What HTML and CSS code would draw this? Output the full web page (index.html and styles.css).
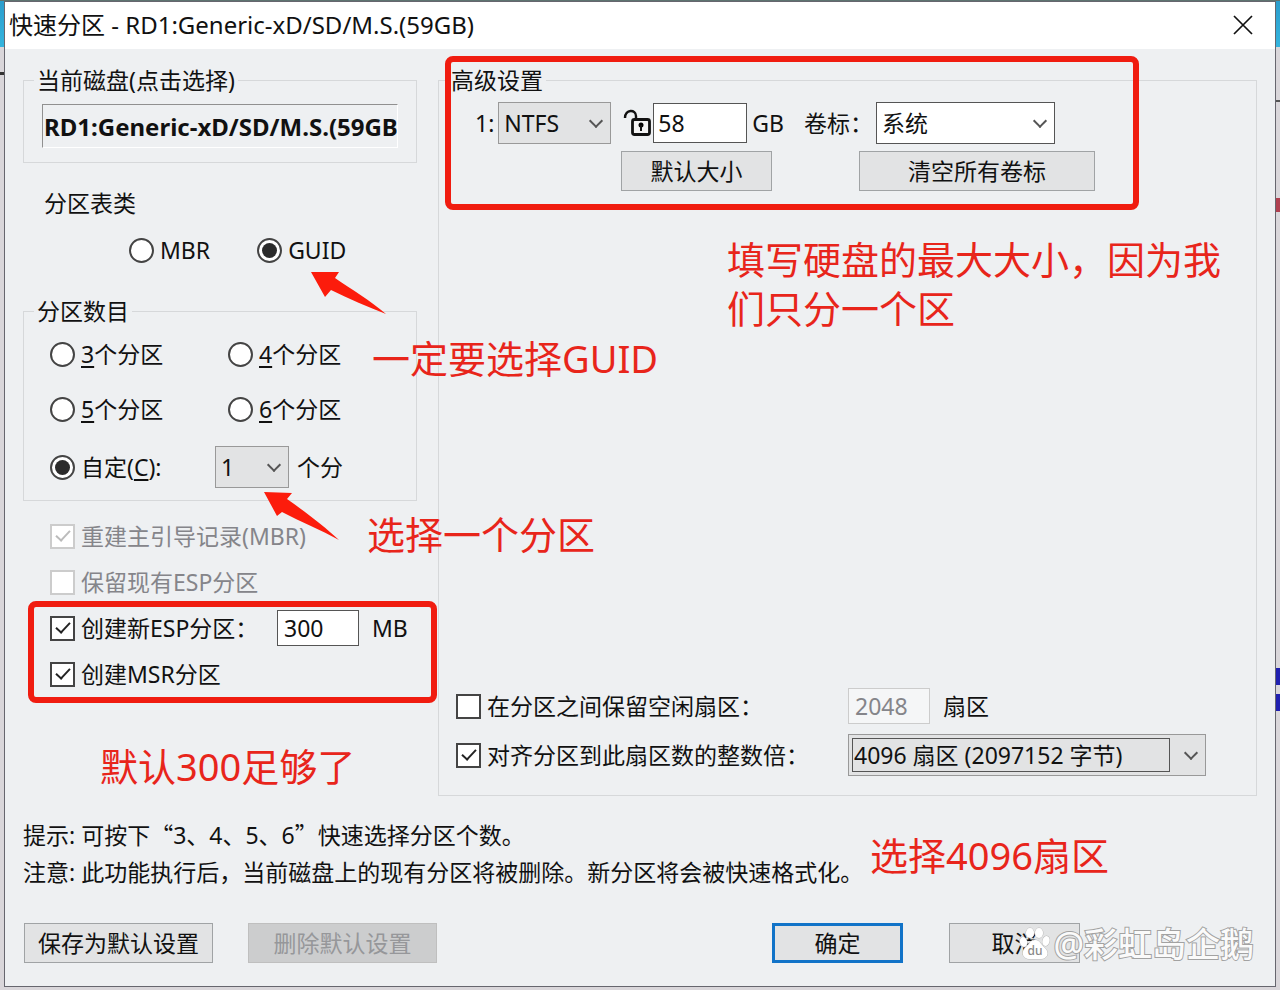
FILE: index.html
```html
<!DOCTYPE html>
<html lang="zh-CN">
<head>
  <meta charset="UTF-8">
  <meta name="viewport" content="width=device-width, initial-scale=1.0">
  <title>快速分区</title>
  <link rel="stylesheet" href="styles.css">
</head>
<body>
  <div class="dialog">
    <header class="titlebar">
      <h1>快速分区 - RD1:Generic-xD/SD/M.S.(59GB)</h1>
      <button class="close" type="button" aria-label="关闭">
        <svg width="20" height="20" viewBox="0 0 20 20"><path d="M1 1L19 19M19 1L1 19" fill="none" stroke="#111" stroke-width="1.7"/></svg>
      </button>
    </header>

    <form class="content">
      <div class="columns">
        <div class="left">
          <fieldset class="group disk">
            <legend>当前磁盘(点击选择)</legend>
            <input class="disk-name" type="text" aria-label="当前磁盘" value="RD1:Generic-xD/SD/M.S.(59GB" readonly>
          </fieldset>

          <div class="table-title">分区表类</div>
          <div class="table-type">
            <label class="option"><input type="radio" name="table">MBR</label>
            <label class="option"><input type="radio" name="table" checked>GUID</label>
          </div>

          <fieldset class="group count">
            <legend>分区数目</legend>
            <div class="count-grid">
              <label class="option"><input type="radio" name="count"><span><u>3</u>个分区</span></label>
              <label class="option"><input type="radio" name="count"><span><u>4</u>个分区</span></label>
              <label class="option"><input type="radio" name="count"><span><u>5</u>个分区</span></label>
              <label class="option"><input type="radio" name="count"><span><u>6</u>个分区</span></label>
            </div>
            <div class="count-custom">
              <label class="option"><input type="radio" name="count" checked><span>自定(<u>C</u>):</span></label>
              <span class="select count-select"><select id="num"><option>1</option></select></span>
              <label for="num">个分</label>
            </div>
          </fieldset>

          <div class="checks">
            <label class="option disabled"><input type="checkbox" checked disabled>重建主引导记录(MBR)</label>
            <label class="option disabled"><input type="checkbox" disabled>保留现有ESP分区</label>
            <div class="esp-row">
              <label class="option"><input type="checkbox" checked>创建新ESP分区：</label>
              <input class="field small" id="esp" type="text" value="300">
              <label for="esp">MB</label>
            </div>
            <label class="option"><input type="checkbox" checked>创建MSR分区</label>
          </div>
        </div>

        <fieldset class="group advanced">
          <legend>高级设置</legend>
          <div class="part-row">
            <label for="fs">1:</label>
            <span class="select fs-select"><select id="fs"><option>NTFS</option></select></span>
            <svg class="lock" width="30" height="28" viewBox="0 0 30 28">
              <path d="M2 9C2 0 13 0 13 7V11" fill="none" stroke="#111" stroke-width="2.4"/>
              <rect x="9.500" y="10.500" width="17" height="15" rx="2" fill="#f4f4f4" stroke="#111" stroke-width="2.8"/>
              <circle cx="18" cy="16" r="2.500"/>
              <path d="M18 16V22" stroke="#111" stroke-width="2"/>
            </svg>
            <input class="field size" id="size" type="text" value="58">
            <label for="size" class="unit">GB</label>
            <label for="vol" class="vol-label">卷标：</label>
            <span class="select white vol-select"><select id="vol"><option>系统</option></select></span>
          </div>
          <div class="part-buttons">
            <button class="btn default-size" type="button">默认大小</button>
            <button class="btn clear-labels" type="button">清空所有卷标</button>
          </div>
          <div class="sectors">
            <label class="option"><input type="checkbox">在分区之间保留空闲扇区：</label>
            <div class="sector-field">
              <input class="field small" id="gap" type="text" value="2048" disabled>
              <label for="gap">扇区</label>
            </div>
            <label class="option"><input type="checkbox" checked>对齐分区到此扇区数的整数倍：</label>
            <span class="select focused align-select"><select aria-label="对齐扇区数"><option>4096 扇区 (2097152 字节)</option></select></span>
          </div>
        </fieldset>
      </div>

      <div class="hints">
        <p>提示: 可按下<span class="quote">“</span>3、4、5、6<span class="quote">”</span>快速选择分区个数。</p>
        <p>注意: 此功能执行后，当前磁盘上的现有分区将被删除。新分区将会被快速格式化。</p>
      </div>

      <footer class="buttons">
        <button class="btn wide" type="button">保存为默认设置</button>
        <button class="btn wide" type="button" disabled>删除默认设置</button>
        <button class="btn primary" type="button">确定</button>
        <button class="btn" type="button">取消</button>
      </footer>
    </form>
  </div>

  <!-- notes over the dialog -->
  <div class="box box-advanced"></div>
  <div class="box box-esp"></div>
  <p class="note note-size">填写硬盘的最大大小，因为我们只分一个区</p>
  <p class="note note-guid">一定要选择GUID</p>
  <p class="note note-one">选择一个分区</p>
  <p class="note note-esp">默认300足够了</p>
  <p class="note note-sector">选择4096扇区</p>
  <svg class="arrow arrow-guid" width="76" height="46" viewBox="0 0 76 46"><path d="M0 1L28 1L24 7C40 18 60 30 75 43C57 36 38 28 20 19L14 26Z" fill="#fc1c0c"/></svg>
  <svg class="arrow arrow-one" width="76" height="50" viewBox="0 0 76 50"><path d="M0 1L28 2L23 8C40 20 60 35 75 49C57 39 37 31 18 21L13 25Z" fill="#fc1c0c"/></svg>
  <div class="watermark">
    <svg width="32" height="34" viewBox="0 0 32 34">
      <g fill="#fff" stroke="#bbb" stroke-width="1">
        <ellipse cx="4.500" cy="15" rx="3.500" ry="5" transform="rotate(-15 4.500 15)"/>
        <ellipse cx="11" cy="6" rx="4" ry="5"/>
        <ellipse cx="20" cy="6" rx="4" ry="5"/>
        <ellipse cx="27" cy="14" rx="3.500" ry="5" transform="rotate(15 27 14)"/>
        <path d="M16 13C11 13 10 18 6 21C1 26 5 32 10 32H22C28 32 31 26 26 21C22 18 21 13 16 13Z"/>
      </g>
      <text x="16" y="28" text-anchor="middle">du</text>
    </svg>
    <span>@彩虹岛企鹅</span>
  </div>
</body>
</html>
```

FILE: styles.css
```css
* { box-sizing: border-box; margin: 0; padding: 0; }

body {
  position: relative;
  min-height: 100vh;
  display: flex;
  padding: 1px 4px 3px;
  font-family: "Noto Sans", "Noto Sans CJK SC", sans-serif;
  font-size: 23px;
  line-height: 30px;
  color: #111;
  background:
    linear-gradient(#5d7370, #5d7370) top / 100% 1px no-repeat,
    linear-gradient(#2020b0, #2020b0) right 668px / 5px 17px no-repeat,
    linear-gradient(#2020b0, #2020b0) right 694px / 5px 17px no-repeat,
    linear-gradient(#b04050, #b04050) right 198px / 4px 14px no-repeat,
    linear-gradient(#555, #555) right 100px / 4px 2px no-repeat,
    linear-gradient(#333, #333) left 72px / 4px 3px no-repeat,
    linear-gradient(#2a9ccc, #35b5de 47px, #d9d6da 47px);
}

input, select, button {
  font: inherit;
  color: inherit;
}

.dialog {
  flex: 1;
  display: flex;
  flex-direction: column;
  border: 1px solid #66666e;
  background: #eef0f2;
}

.titlebar {
  display: flex;
  justify-content: space-between;
  align-items: center;
  height: 47px;
  padding: 0 22px 2px 4px;
  background: #fff;
}

.titlebar h1 {
  font-size: 24px;
  font-weight: normal;
}

.close {
  display: flex;
  border: none;
  background: none;
}

.content {
  flex: 1;
  display: flex;
  flex-direction: column;
  padding: 16px 18px 23px;
}

.columns {
  flex: 1;
  display: grid;
  grid-template-columns: 394px 1fr;
  gap: 21px;
}

.group {
  min-width: 0;
  border: 1px solid #d6d8da;
}

.group legend { padding: 0 3px; }

.disk { padding: 9px 18px 14px; }
.disk legend { margin-left: -8px; }

.disk-name {
  display: block;
  width: 100%;
  height: 44px;
  padding-left: 1px;
  border: 1px solid;
  border-color: #909090 #fff #fff #909090;
  background: #eef0f2;
  font-size: 24px;
  font-weight: bold;
}

.table-title {
  margin: 25px 0 17px 21px;
}

.table-type {
  display: flex;
  gap: 47px;
  padding-left: 106px;
}

.option {
  display: flex;
  align-items: center;
  gap: 6px;
  white-space: nowrap;
}

.option u {
  text-decoration-thickness: 2px;
  text-underline-offset: 3px;
}

.option input {
  appearance: none;
  flex: none;
  display: grid;
  place-items: center;
  width: 25px;
  height: 25px;
  border: 2px solid #444;
  background: #fff;
}

.option input[type="radio"] { border-radius: 50%; }

.option input[type="radio"]:checked::before {
  content: "";
  width: 15px;
  height: 15px;
  border-radius: 50%;
  background: #2b2b2b;
}

.option input[type="checkbox"]:checked::before {
  content: "";
  width: 6px;
  height: 12px;
  margin-bottom: 4px;
  border: solid #222;
  border-width: 0 2px 2px 0;
  transform: rotate(43deg);
}

.disabled { color: #85858a; }
.option input:disabled { border-color: #ccc; }
.option input[type="checkbox"]:disabled::before { border-color: #bbb; }

.count {
  margin-top: 31px;
  padding: 13px 26px 12px;
}

.count legend { margin-left: -16px; }

.count-grid {
  display: grid;
  grid-template-columns: 178px 1fr;
  row-gap: 25px;
}

.count-custom {
  display: flex;
  align-items: center;
  margin-top: 22px;
}

.count-custom .option { width: 165px; }

.select {
  position: relative;
  display: inline-flex;
}

.select select {
  appearance: none;
  width: 100%;
  height: 42px;
  padding: 0 5px;
  border: 1px solid #999;
  border-radius: 0;
  background: #e2e3e4;
}

.select::after {
  content: "";
  position: absolute;
  right: 10px;
  top: 14px;
  width: 8px;
  height: 8px;
  border: solid #555;
  border-width: 0 2px 2px 0;
  transform: rotate(45deg);
}

.white select {
  border-color: #555;
  background: #fff;
}

.count-select {
  width: 74px;
  margin-right: 8px;
}

.checks {
  display: flex;
  flex-direction: column;
  margin-top: 12px;
  padding-left: 27px;
}

.checks > * { height: 46px; }

.esp-row {
  display: flex;
  align-items: center;
}

.esp-row .option { width: 227px; }

.field {
  height: 36px;
  padding: 0 6px;
  border: 1px solid #555;
  background: #fff;
}

.field:disabled {
  border-color: #ccc;
  background: #f5f6f7;
  color: #85858a;
}

.small {
  width: 82px;
  margin-right: 13px;
}

.advanced {
  display: flex;
  flex-direction: column;
  padding: 7px 17px 19px;
}

.advanced legend { margin-left: -8px; }

.part-row {
  display: flex;
  align-items: center;
  padding-left: 19px;
}

.fs-select {
  width: 113px;
  margin: 0 12px 0 4px;
}

.size {
  width: 94px;
  height: 40px;
  padding: 0 4px;
}

.unit { margin: 0 20px 0 5px; }
.vol-label { width: 72px; }
.vol-select { width: 179px; }

.part-buttons {
  display: flex;
  gap: 87px;
  margin-top: 7px;
  padding-left: 165px;
}

.btn {
  width: 131px;
  height: 40px;
  border: 1px solid #a0a3a5;
  background: #e2e3e4;
}

.btn:disabled {
  border-color: #bfbfbf;
  background: #cccdce;
  color: #96979a;
}

.default-size { width: 151px; }
.clear-labels { width: 236px; }

.sectors {
  display: grid;
  grid-template-columns: 392px 1fr;
  row-gap: 10px;
  align-items: center;
  margin-top: auto;
}

.sector-field {
  display: flex;
  align-items: center;
}

.align-select { width: 358px; }

/* focus frame of the active drop-down */
.focused::before {
  content: "";
  position: absolute;
  inset: 4px 36px 4px 4px;
  border: 1px solid #555;
}

.hints {
  margin-top: 20px;
  line-height: 37px;
}

.quote { font-family: "Noto Sans CJK SC", sans-serif; }

.buttons {
  display: flex;
  margin-top: 32px;
  padding: 0 177px 0 1px;
}

.wide {
  width: 189px;
  margin-right: 35px;
}

.primary {
  margin: 0 46px 0 auto;
  border: 3px solid #1173c8;
}

.box {
  position: absolute;
  border: 6px solid #f01c10;
  border-radius: 8px;
}

.box-advanced {
  left: 445px;
  top: 56px;
  width: 694px;
  height: 154px;
}

.box-esp {
  left: 28px;
  top: 601px;
  width: 409px;
  height: 102px;
}

.note {
  position: absolute;
  font-size: 38px;
  line-height: 49px;
  color: #e8251b;
}

.note-size { left: 727px; top: 235px; width: 500px; }
.note-guid { left: 372px; top: 334px; }
.note-one { left: 367px; top: 510px; }
.note-esp { left: 100px; top: 742px; }
.note-sector { left: 870px; top: 831px; }

.arrow { position: absolute; }
.arrow-guid { left: 311px; top: 271px; }
.arrow-one { left: 264px; top: 491px; }

.watermark {
  position: absolute;
  right: 26px;
  bottom: 22px;
  display: flex;
  align-items: center;
  gap: 2px;
  font-size: 34px;
  font-weight: 500;
  line-height: 48px;
  color: #fafafa;
  -webkit-text-stroke: 2px #a2a2a2;
  paint-order: stroke fill;
}

.watermark text {
  font-size: 12px;
  fill: #888;
  -webkit-text-stroke: 0;
}
```
